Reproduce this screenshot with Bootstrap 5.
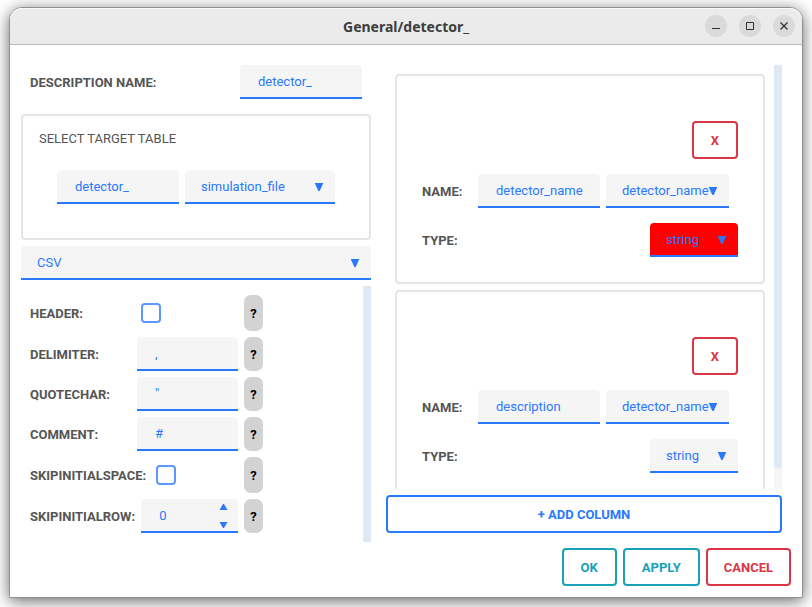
<!DOCTYPE html>
<html lang="en">
<head>
<meta charset="utf-8">
<meta name="viewport" content="width=device-width, initial-scale=1">
<title>General/detector_</title>
<link href="https://cdn.jsdelivr.net/npm/bootstrap@5.3.0/dist/css/bootstrap.min.css" rel="stylesheet">
<style>
:root { --accent: #2979ff; --field: #f5f5f5; --ink: #555; --line: #e6e6e6; --track: #e0e8f6; }
body { font: 13px/20px Roboto, "Liberation Sans", sans-serif; color: var(--ink); padding: 7px 9px 9px; background: #fff; }
label { font-weight: 700; white-space: nowrap; padding-top: 2px; flex-shrink: 0; }
.window { border: 1px solid #8e908e; border-radius: 13px 13px 0 0; box-shadow: 0 3px 16px rgba(0,0,0,.6); background: #fff; }
.titlebar { height: 37px; background: #ebebeb; border-bottom: 1px solid #bcbcbc; border-radius: 12px 12px 0 0; box-shadow: inset 0 1px #fafafa; padding: 0 7px; display: grid; grid-template-columns: 1fr auto 1fr; align-items: center; }
.titlebar h1 { font: 700 14px/20px "Noto Sans", sans-serif; color: #3d3d3d; grid-column: 2; padding-top: 2px; }
.win-btns { gap: 12px; }
.win-btn { width: 22px; height: 22px; border: 0; border-radius: 50%; background: #dadada; padding: 0; display: flex; }
.panes { display: grid; grid-template-columns: 350fr 396fr; grid-template-rows: minmax(0, 1fr); gap: 15px; padding: 20px 20px 6px 11px; }
.right-pane { padding-bottom: 9px; }
.name-row { padding: 0 9px; }
.field { height: 34px; font-size: 13px; line-height: 20px; color: var(--accent); background-color: var(--field); border: 0; border-bottom: 2px solid var(--accent); border-radius: 4px 4px 0 0; padding: 0 18px; }
.field:focus { color: var(--accent); background-color: var(--field); box-shadow: none; border-color: var(--accent); }
select.field { padding: 2px 12px 0 16px; background-size: 10px 8px; background-position: right 11px top 13px; background-image: url("data:image/svg+xml,%3Csvg xmlns='http://www.w3.org/2000/svg' viewBox='0 0 10 8'%3E%3Cpath d='M.7 0h8.600L5.700 8H4.300z' fill='%232979ff'/%3E%3C/svg%3E"); }
select.field.invalid { background-color: red; }
.w-name { width: 122px; }
.w-column { width: 123px; }
.w-name, .w-column { padding-right: 12px; }
.w-table { width: 150px; }
.w-type { width: 88px; }
.group { border: 2px solid var(--line); border-radius: 4px; }
.target { height: 126px; margin: 15px 0 6px; padding: 13px 16px; }
.target-fields { margin: 21px 0 0 18px; }
.column-card { flex: none; height: 210px; padding: 45px 25px 25px; }
.card-line { margin-top: 15px; }
.name-line { padding-right: 9px; }
.option-list { padding: 9px; }
.option { min-height: 34px; gap: 6px; }
.option.tall { min-height: 36px; }
.option-main { width: 208px; gap: 6px; }
.option-main label { min-width: 101px; }
.option .field { min-width: 0; }
.option .form-check-input { width: 20px; height: 20px; margin: 0 0 0 4px; border: 2px solid #5c98ff; border-radius: 4px; }
.help { width: 19px; border: 0; border-radius: 7px; background: #d3d3d3; color: #000; font-weight: 700; padding: 2px 0 0; }
input[type=number] { appearance: textfield; -moz-appearance: textfield; }
input[type=number]::-webkit-inner-spin-button { display: none; }
.stepper { right: 10px; top: 4px; bottom: 4px; }
.stepper button { border: 0; background: none; padding: 0; line-height: 0; }
.columns-view { min-height: 0; flex-basis: 0; }
.bar { width: 8px; background: var(--field); }
.bar-thumb { background: var(--track); }
.thumb-partial { height: 95%; }
.action { height: 38px; min-width: 46px; font-size: 13px; font-weight: 700; line-height: 20px; border-width: 2px; border-radius: 4px; padding: 2px 16px 0; background: #fff; }
.action-blue { color: var(--accent); border-color: var(--accent); }
.action-teal { color: #17a2b8; border-color: #17a2b8; padding: 2px 17px 0; }
.action-red { color: #dc3545; border-color: #dc3545; }
.gap-6 { gap: 6px; }
.mt-6 { margin-top: 6px; }
.footer-bar { padding: 0 11px 11px; }
</style>
<script src="https://cdn.jsdelivr.net/npm/bootstrap@5.3.0/dist/js/bootstrap.bundle.min.js"></script>
</head>
<body class="vh-100 d-flex">
<div class="window d-flex flex-column flex-grow-1">
  <header class="titlebar">
    <h1 class="m-0">General/detector_</h1>
    <div class="win-btns d-flex justify-content-end">
      <button class="win-btn" type="button" aria-label="Minimize"><svg width="22" height="22"><path d="M7 13.500h8" stroke="#333"/></svg></button>
      <button class="win-btn" type="button" aria-label="Maximize"><svg width="22" height="22"><path d="M7.500 7.500h7v7h-7z" fill="none" stroke="#333"/></svg></button>
      <button class="win-btn" type="button" aria-label="Close"><svg width="22" height="22"><path d="M7.500 7.500l7 7m0-7l-7 7" stroke="#333" stroke-width="1.300"/></svg></button>
    </div>
  </header>

  <main class="panes flex-grow-1">
    <section class="d-flex flex-column">
      <div class="name-row d-flex align-items-center justify-content-between">
        <label for="desc">DESCRIPTION NAME:</label>
        <input id="desc" class="form-control field w-name" value="detector_">
      </div>
      <fieldset class="group target">
        <div>SELECT TARGET TABLE</div>
        <div class="target-fields d-flex gap-6">
          <input class="form-control field w-name" aria-label="Table prefix" value="detector_">
          <select class="form-select field w-table" aria-label="Table"><option>simulation_file</option></select>
        </div>
      </fieldset>
      <select class="form-select field flex-shrink-0" aria-label="Format"><option>CSV</option></select>
      <div class="d-flex flex-grow-1 mt-6">
        <div class="option-list d-flex flex-column gap-6 flex-grow-1">
          <div class="option tall d-flex">
            <div class="option-main d-flex align-items-center"><label for="header">HEADER:</label><input id="header" type="checkbox" class="form-check-input"></div>
            <button type="button" class="help">?</button>
          </div>
          <div class="option d-flex">
            <div class="option-main d-flex align-items-center"><label for="delim">DELIMITER:</label><input id="delim" class="form-control field" value=","></div>
            <button type="button" class="help">?</button>
          </div>
          <div class="option d-flex">
            <div class="option-main d-flex align-items-center"><label for="quote">QUOTECHAR:</label><input id="quote" class="form-control field" value="&quot;"></div>
            <button type="button" class="help">?</button>
          </div>
          <div class="option d-flex">
            <div class="option-main d-flex align-items-center"><label for="comment">COMMENT:</label><input id="comment" class="form-control field" value="#"></div>
            <button type="button" class="help">?</button>
          </div>
          <div class="option tall d-flex">
            <div class="option-main d-flex align-items-center"><label for="skipspace">SKIPINITIALSPACE:</label><input id="skipspace" type="checkbox" class="form-check-input"></div>
            <button type="button" class="help">?</button>
          </div>
          <div class="option d-flex">
            <div class="option-main d-flex align-items-center"><label for="skiprow">SKIPINITIALROW:</label>
              <div class="position-relative flex-grow-1">
                <input id="skiprow" type="number" class="form-control field" value="0">
                <div class="stepper position-absolute d-flex flex-column justify-content-between">
                  <button type="button" aria-label="Increase"><svg width="9" height="8"><path d="M4 1h1l3.500 6h-8z" fill="#2979ff"/></svg></button>
                  <button type="button" aria-label="Decrease"><svg width="9" height="8"><path d="M.5 1h8l-3.500 6H4z" fill="#2979ff"/></svg></button>
                </div>
              </div>
            </div>
            <button type="button" class="help">?</button>
          </div>
        </div>
        <div class="bar"><div class="bar-thumb h-100"></div></div>
      </div>
    </section>

    <section class="right-pane d-flex flex-column gap-6">
      <div class="columns-view d-flex flex-grow-1 overflow-hidden">
        <div class="option-list d-flex flex-column gap-6 flex-grow-1">
          <div class="column-card group">
            <div class="d-flex justify-content-end"><button type="button" class="btn action action-red">X</button></div>
            <div class="card-line name-line d-flex align-items-center gap-6">
              <label class="me-auto" for="name1">NAME:</label>
              <input id="name1" class="form-control field w-name" value="detector_name">
              <select class="form-select field w-column" aria-label="Source column"><option>detector_name</option></select>
            </div>
            <div class="card-line d-flex align-items-center justify-content-between">
              <label for="type1">TYPE:</label>
              <select id="type1" class="form-select field w-type invalid"><option>string</option></select>
            </div>
          </div>
          <div class="column-card group">
            <div class="d-flex justify-content-end"><button type="button" class="btn action action-red">X</button></div>
            <div class="card-line name-line d-flex align-items-center gap-6">
              <label class="me-auto" for="name2">NAME:</label>
              <input id="name2" class="form-control field w-name" value="description">
              <select class="form-select field w-column" aria-label="Source column"><option>detector_name</option></select>
            </div>
            <div class="card-line d-flex align-items-center justify-content-between">
              <label for="type2">TYPE:</label>
              <select id="type2" class="form-select field w-type"><option>string</option></select>
            </div>
          </div>
        </div>
        <div class="bar"><div class="bar-thumb thumb-partial"></div></div>
      </div>
      <button type="button" class="btn action action-blue flex-shrink-0">+ ADD COLUMN</button>
    </section>
  </main>

  <footer class="footer-bar d-flex justify-content-end gap-6">
    <button type="button" class="btn action action-teal">OK</button>
    <button type="button" class="btn action action-teal">APPLY</button>
    <button type="button" class="btn action action-red">CANCEL</button>
  </footer>
</div>
</body>
</html>
